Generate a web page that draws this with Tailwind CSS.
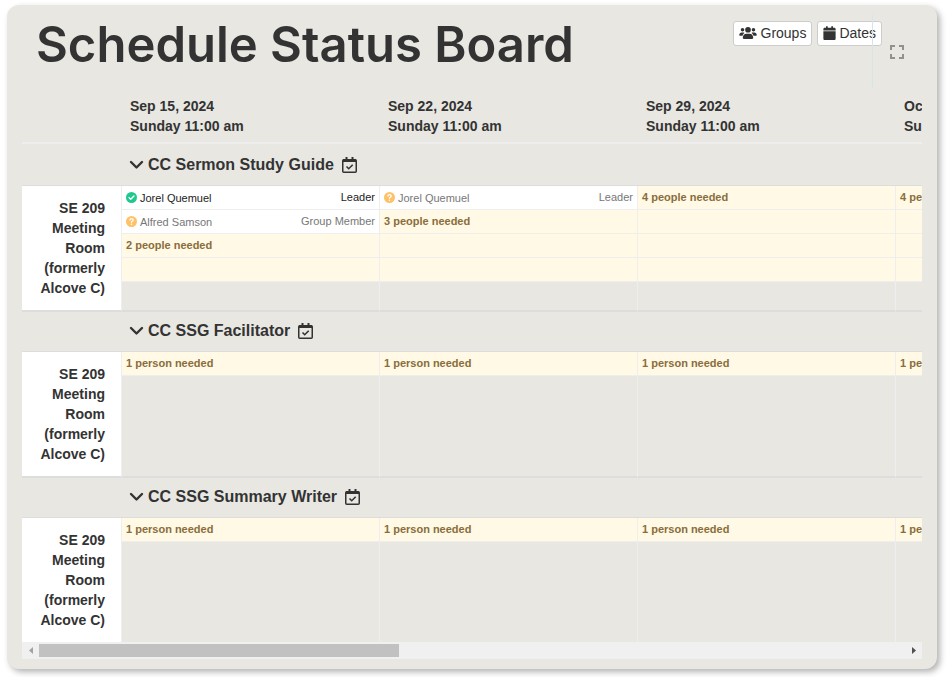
<!DOCTYPE html>
<html lang="en">

<head>
    <meta charset="UTF-8">
    <meta name="viewport" content="width=device-width, initial-scale=1.0">
    <title>Schedule Status Board</title>
    <script src="https://cdn.jsdelivr.net/npm/@tailwindcss/browser@4"></script>
</head>

<body class="bg-white pb-2 font-['Liberation_Sans',Arial,sans-serif] text-[#333]">
    <!-- icons -->
    <svg class="hidden">
        <symbol id="icon-check" viewBox="0 0 512 512">
            <circle cx="256" cy="256" r="256" fill="#1fc98e" />
            <path d="M140 262l80 78 152-152" fill="none" stroke="#fff" stroke-width="64" stroke-linecap="round" stroke-linejoin="round" />
        </symbol>
        <symbol id="icon-question" viewBox="0 0 512 512">
            <circle cx="256" cy="256" r="256" fill="#ffc168" />
            <path d="M180 190c0-90 156-90 156-2c0 56-80 50-80 106" fill="none" stroke="#fff" stroke-width="60" stroke-linecap="round" />
            <circle cx="256" cy="384" r="36" fill="#fff" />
        </symbol>
        <symbol id="icon-chevron" viewBox="0 0 14 10">
            <path d="M1.500 2l5.500 5.500 5.500-5.500" fill="none" stroke="currentColor" stroke-width="2.400" stroke-linecap="round" stroke-linejoin="round" />
        </symbol>
        <symbol id="icon-calendar-check" viewBox="0 0 15 16">
            <path d="M1 2h13v3H1z" fill="currentColor" />
            <path d="M4.500 0v3M10.500 0v3" stroke="currentColor" stroke-width="2" />
            <rect x=".750" y="2.750" width="13.500" height="12.500" rx="1" fill="none" stroke="currentColor" stroke-width="1.500" />
            <path d="M4.500 9.500l2.200 2.200 4-4" fill="none" stroke="currentColor" stroke-width="1.600" />
        </symbol>
    </svg>

    <main class="relative mt-[5px] mr-[10px] ml-[7px] rounded-xl bg-[#e8e7e2] px-[15px] pb-[10px] shadow-[3px_3px_6px_rgba(0,0,0,0.3)]">
        <header class="flex h-[91px] items-start justify-between pl-[14px]">
            <h1 class="pt-[10px] font-['Century_Gothic',Inter,sans-serif] text-[49px] leading-[60px] font-semibold whitespace-nowrap">Schedule Status Board</h1>
            <div class="flex gap-[5px] pt-4 pr-[18px]">
                <button class="flex h-[25px] items-center gap-1 rounded-[3px] border border-[#ccc] bg-white px-[5px] pb-px text-sm">
                    <svg class="h-[14px] w-[18px]" viewBox="0 0 640 512" fill="currentColor">
                        <path d="M120 72a66 66 0 1 1 0 132A66 66 0 1 1 120 72zM520 72a66 66 0 1 1 0 132A66 66 0 1 1 520 72zM0 330C0 276 40 240 88 240h56c18 0 34 5 46 14c-34 24-60 56-66 98H22C9 352 0 343 0 330zM516 352c-6-42-32-74-66-98c12-9 28-14 46-14h56c48 0 88 36 88 90c0 13-9 22-22 22H516zM216 136a104 104 0 1 1 208 0 104 104 0 1 1-208 0zM128 430C128 340 190 282 262 282h116C450 282 512 340 512 430c0 28-14 42-40 42H168c-26 0-40-14-40-42z" />
                    </svg>
                    Groups
                </button>
                <button class="flex h-[25px] items-center gap-[3px] rounded-[3px] border border-[#ccc] bg-white px-[5px] pb-px text-sm">
                    <svg class="h-[14px] w-[13px]" viewBox="0 0 448 512" fill="currentColor">
                        <path d="M96 32V64H48C21.500 64 0 85.500 0 112v48H448V112c0-26.500-21.500-48-48-48H352V32c0-17.700-14.300-32-32-32s-32 14.300-32 32V64H160V32c0-17.700-14.300-32-32-32S96 14.300 96 32zM448 192H0V464c0 26.500 21.500 48 48 48H400c26.500 0 48-21.500 48-48V192z" />
                    </svg>
                    Dates
                </button>
                <button class="mt-6 ml-[3px] h-[14px] w-[14px] text-[#92918e]" aria-label="Full screen">
                    <svg viewBox="0 0 14 14" fill="none" stroke="currentColor" stroke-width="2">
                        <path d="M1 5V1h4M9 1h4v4M13 9v4H9M5 13H1V9" />
                    </svg>
                </button>
            </div>
        </header>
        <div class="absolute top-[10px] right-[64px] h-[73px] w-px bg-[#d6e4ec]"></div>

        <div class="overflow-hidden">
            <table class="w-[1131px] table-fixed border-separate border-spacing-0 text-left">
                <colgroup>
                    <col class="w-[99px]">
                    <col class="w-[258px]">
                    <col class="w-[258px]">
                    <col class="w-[258px]">
                    <col class="w-[258px]">
                </colgroup>
                <thead>
                    <tr id="dates" class="text-sm leading-5"></tr>
                </thead>
                <tbody id="board"></tbody>
            </table>
        </div>

        <!-- scrollbar -->
        <div class="flex h-[17px] items-center bg-[#f0f0f0]">
            <button class="flex h-full w-[17px] items-center justify-center text-[#a3a3a3]" aria-label="Scroll left">
                <svg class="h-[7px] w-1" viewBox="0 0 4 7" fill="currentColor"><path d="M4 0v7L0 3.500z" /></svg>
            </button>
            <div class="flex-1"><div class="h-[13px] w-[360px] bg-[#c1c1c1]"></div></div>
            <button class="flex h-full w-[17px] items-center justify-center text-[#505050]" aria-label="Scroll right">
                <svg class="h-[7px] w-1" viewBox="0 0 4 7" fill="currentColor"><path d="M0 0v7l4-3.500z" /></svg>
            </button>
        </div>
    </main>
</body>
<script>
    const dates = ["Sep 15, 2024", "Sep 22, 2024", "Sep 29, 2024", "Oct 6, 2024"];
    const room = "SE 209 Meeting Room (formerly Alcove C)";

    const sections = [
        {
            name: "CC Sermon Study Guide",
            slots: 4,
            days: [
                {
                    people: [
                        { name: "Jorel Quemuel", role: "Leader", confirmed: true },
                        { name: "Alfred Samson", role: "Group Member", confirmed: false },
                    ],
                },
                { people: [{ name: "Jorel Quemuel", role: "Leader", confirmed: false }] },
                { people: [] },
                { people: [] },
            ],
        },
        { name: "CC SSG Facilitator", slots: 1, days: [{ people: [] }, { people: [] }, { people: [] }, { people: [] }] },
        { name: "CC SSG Summary Writer", slots: 1, days: [{ people: [] }, { people: [] }, { people: [] }, { people: [] }] },
    ];

    const personRow = ({ name, role, confirmed }) => `
        <div class="flex h-6 items-center border-b border-[#eee] bg-white px-1 ${confirmed ? 'text-[#222]' : 'text-[#777]'}">
            <svg class="mr-[3px] h-[11px] w-[11px]"><use href="${confirmed ? '#icon-check' : '#icon-question'}" /></svg>
            <span>${name}</span>
            <span class="ml-auto pb-px">${role}</span>
        </div>`;

    const neededRow = (text) => `
        <div class="flex h-6 items-center border-b border-[#eee] bg-[#fff9e5] px-1 pb-[2px] font-bold text-[#8a6d3b]">${text}</div>`;

    const dayCell = (day, slots) => {
        const open = slots - day.people.length;
        let rows = day.people.map(personRow).join("");
        for (let i = 0; i < open; i++) {
            rows += neededRow(i === 0 ? `${open} ${open === 1 ? "person" : "people"} needed` : "");
        }
        return rows;
    }

    document.getElementById("dates").innerHTML = `<td class="border-b-2 border-[#eee]"></td>` + dates.map(date => `
        <th class="border-b-2 border-[#eee] pb-[6px] pl-[9px] whitespace-nowrap">${date}<br>Sunday 11:00 am</th>`).join("");

    document.getElementById("board").innerHTML = sections.map((section, index) => {
        const first = index === 0;
        const last = index === sections.length - 1;
        return `
        <tr>
            <td class="border-b border-[#ddd]"></td>
            <th colspan="4" class="border-b border-[#ddd] pb-[10px] pl-2 ${first ? 'pt-[11px]' : 'pt-[9px]'}">
                <button class="flex h-5 items-center text-base leading-5 font-bold">
                    <svg class="mr-1 h-[10px] w-[15px]"><use href="#icon-chevron" /></svg>
                    ${section.name}
                    <svg class="ml-2 h-4 w-[15px]"><use href="#icon-calendar-check" /></svg>
                </button>
            </th>
        </tr>
        <tr>
            <th class="bg-white py-3 pr-4 text-right text-sm leading-5 ${last ? '' : 'border-b-2 border-[#ddd]'}">${room}</th>
            ${section.days.map(day => `
            <td class="border-l border-l-[#eee] align-top text-[11px] leading-4 ${last ? '' : 'border-b-2 border-b-[#ddd]'}">${dayCell(day, section.slots)}</td>`).join("")}
        </tr>`;
    }).join("");
</script>

</html>
